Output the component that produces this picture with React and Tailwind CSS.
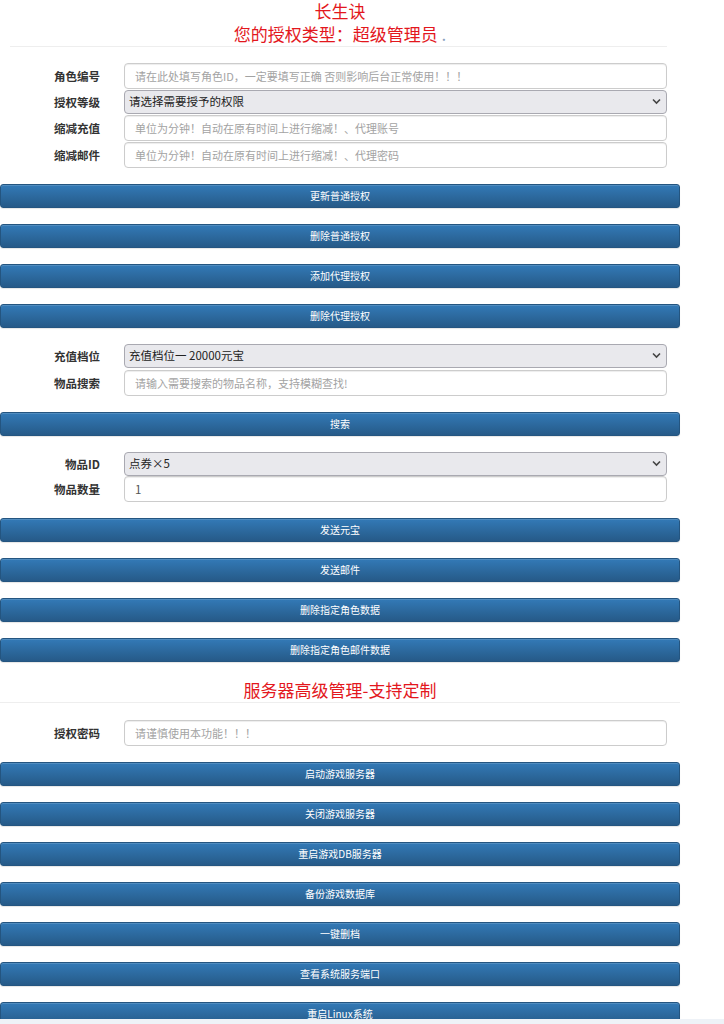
import React from "react";

const font = { fontFamily: '"Microsoft YaHei", "Noto Sans CJK SC", "Noto Sans", sans-serif' };

function Label({ children }) {
  return (
    <div className="w-[100px] shrink-0 text-right text-[11.5px] font-bold leading-[16px] text-[#333]">
      {children}
    </div>
  );
}

function InputRow({ label, placeholder, value, className = "" }) {
  return (
    <div className={"flex items-center " + className}>
      <Label>{label}</Label>
      <input
        className="ml-[24px] block h-[26px] w-[543px] rounded-[4px] border border-[#ccc] bg-white px-[10px] text-[11.5px] text-[#555] shadow-[inset_0_1px_1px_rgba(0,0,0,0.075)] outline-none placeholder:text-[11px] placeholder:text-[#a3a3a3]"
        placeholder={placeholder}
        defaultValue={value}
      />
    </div>
  );
}

function SelectRow({ label, value, className = "" }) {
  return (
    <div className={"flex items-center " + className}>
      <Label>{label}</Label>
      <div className="relative ml-[24px] h-[24px] w-[543px]">
        <select
          className="block h-[24px] w-full appearance-none rounded-[4px] border border-[#a9a9b1] bg-[#e9e9ed] pl-[4px] text-[11.5px] text-[#222] outline-none"
          defaultValue={value}
        >
          <option>{value}</option>
        </select>
        <svg
          className="pointer-events-none absolute right-[6px] top-[8px]"
          width="9"
          height="7"
          viewBox="0 0 9 7"
        >
          <path d="M1 1.5 L4.5 5 L8 1.5" fill="none" stroke="#444" strokeWidth="1.6" />
        </svg>
      </div>
    </div>
  );
}

function Btn({ children, className = "" }) {
  return (
    <button
      className={
        "flex h-[24px] w-[680px] shrink-0 items-center justify-center rounded-[3px] border border-[#245580] bg-gradient-to-b from-[#337ab7] to-[#265a88] text-[10px] leading-[14px] text-white shadow-[inset_0_1px_0_rgba(255,255,255,0.15),0_1px_1px_rgba(0,0,0,0.1)] " +
        className
      }
    >
      {children}
    </button>
  );
}

export default function App() {
  return (
    <div className="min-h-[1024px] bg-white" style={font}>
      <div className="w-[680px] pb-[40px]">
        <div className="text-center text-[17px] leading-[21px] text-[#e3171d]">长生诀</div>
        <div className="text-center text-[17px] leading-[25px] text-[#e3171d]">
          您的授权类型：超级管理员 <span className="text-[#8aa0c0]">.</span>
        </div>
        <div className="ml-[10px] w-[657px] border-t border-[#eeeeee]" />

        <InputRow
          className="mt-[16px]"
          label="角色编号"
          placeholder="请在此处填写角色ID，一定要填写正确 否则影响后台正常使用！！！"
        />
        <SelectRow className="mt-[1px]" label="授权等级" value="请选择需要授予的权限" />
        <InputRow
          className="mt-[1px]"
          label="缩减充值"
          placeholder="单位为分钟！自动在原有时间上进行缩减！、代理账号"
        />
        <InputRow
          className="mt-[1px]"
          label="缩减邮件"
          placeholder="单位为分钟！自动在原有时间上进行缩减！、代理密码"
        />

        <div className="mt-[16px] flex flex-col gap-[16px]">
          <Btn>更新普通授权</Btn>
          <Btn>删除普通授权</Btn>
          <Btn>添加代理授权</Btn>
          <Btn>删除代理授权</Btn>
        </div>

        <SelectRow className="mt-[16px]" label="充值档位" value="充值档位一 20000元宝" />
        <InputRow
          className="mt-[2px]"
          label="物品搜索"
          placeholder="请输入需要搜索的物品名称，支持模糊查找!"
        />
        <Btn className="mt-[16px]">搜索</Btn>

        <SelectRow className="mt-[16px]" label="物品ID" value="点券×5" />
        <InputRow label="物品数量" value="1" />

        <div className="mt-[16px] flex flex-col gap-[16px]">
          <Btn>发送元宝</Btn>
          <Btn>发送邮件</Btn>
          <Btn>删除指定角色数据</Btn>
          <Btn>删除指定角色邮件数据</Btn>
        </div>

        <div className="mt-[16px] text-center text-[17px] leading-[24px] text-[#e3171d]">
          服务器高级管理-支持定制
        </div>
        <div className="w-[680px] border-t border-[#eeeeee]" />

        <InputRow className="mt-[17px]" label="授权密码" placeholder="请谨慎使用本功能！！！" />

        <div className="mt-[16px] flex flex-col gap-[16px]">
          <Btn>启动游戏服务器</Btn>
          <Btn>关闭游戏服务器</Btn>
          <Btn>重启游戏DB服务器</Btn>
          <Btn>备份游戏数据库</Btn>
          <Btn>一键删档</Btn>
          <Btn>查看系统服务端口</Btn>
          <Btn>重启Linux系统</Btn>
        </div>
      </div>
      <div className="fixed bottom-0 left-0 h-[5px] w-full bg-[#eef2f7]" />
    </div>
  );
}
